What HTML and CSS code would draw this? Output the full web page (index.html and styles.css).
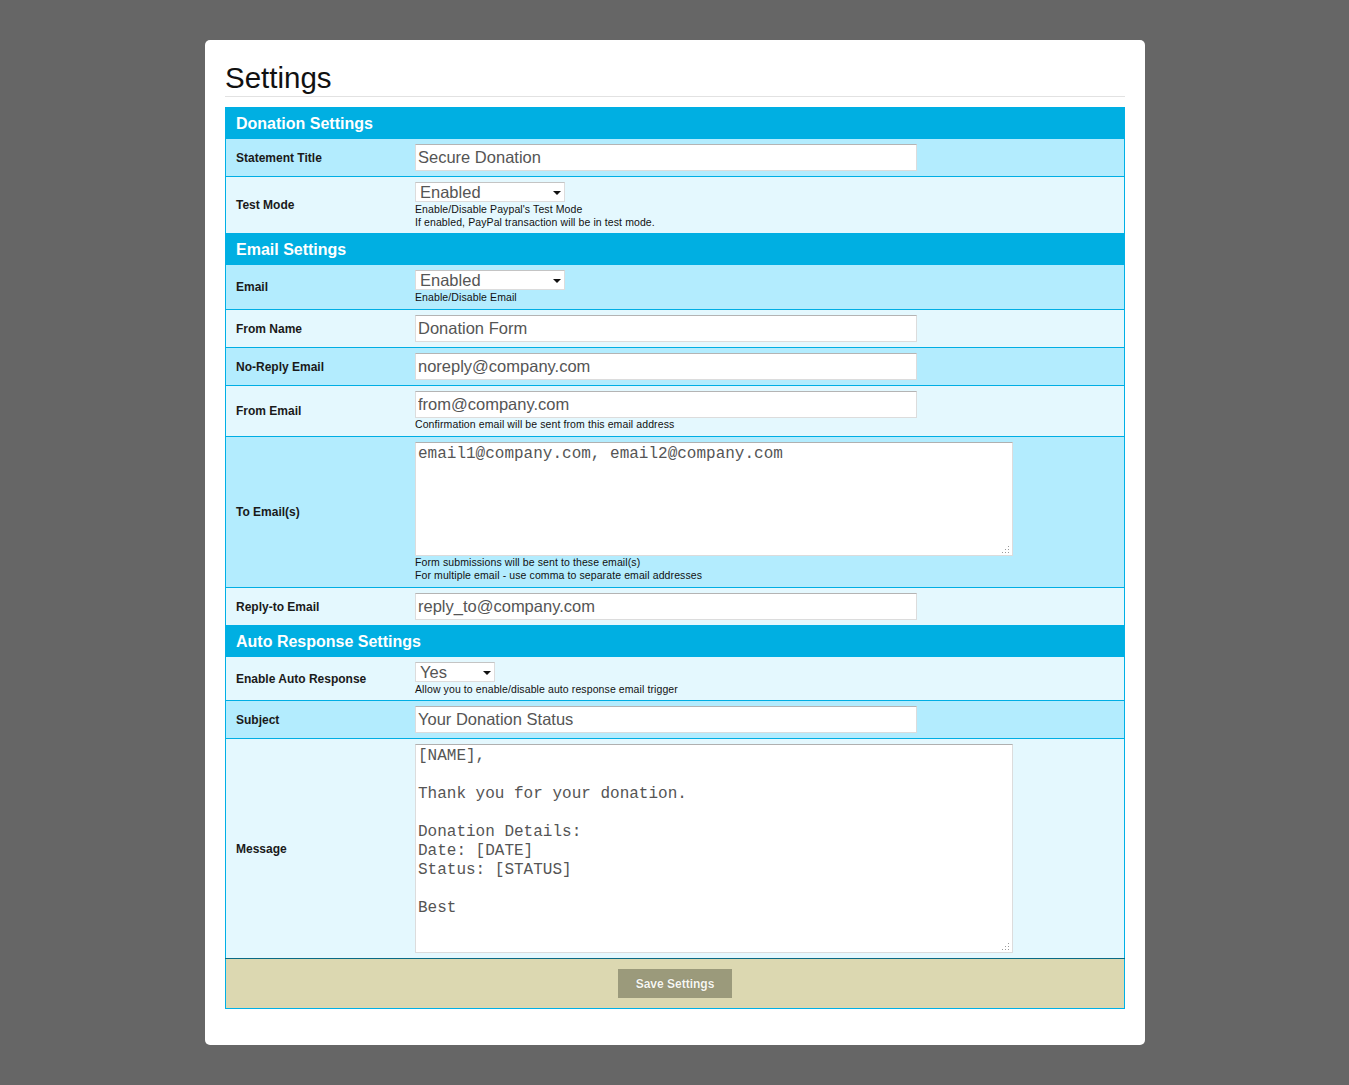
FILE: index.html
```html
<!DOCTYPE html>
<html>
<head>
<meta charset="utf-8">
<title>Settings</title>
<link rel="stylesheet" href="styles.css">
</head>
<body>
<div class="card">
  <h1 class="title">Settings</h1>
  <table class="settings">
    <tr class="section"><th colspan="2">Donation Settings</th></tr>
    <tr class="row-a">
      <td class="label">Statement Title</td>
      <td class="field"><input class="text" type="text" value="Secure Donation"></td>
    </tr>
    <tr class="row-b">
      <td class="label">Test Mode</td>
      <td class="field tight">
        <span class="select-wrap w150"><select class="select"><option>Enabled</option><option>Disabled</option></select></span>
        <div class="help">Enable/Disable Paypal's Test Mode<br>If enabled, PayPal transaction will be in test mode.</div>
      </td>
    </tr>
    <tr class="section"><th colspan="2">Email Settings</th></tr>
    <tr class="row-a">
      <td class="label">Email</td>
      <td class="field">
        <span class="select-wrap w150"><select class="select"><option>Enabled</option><option>Disabled</option></select></span>
        <div class="help">Enable/Disable Email</div>
      </td>
    </tr>
    <tr class="row-b">
      <td class="label">From Name</td>
      <td class="field"><input class="text" type="text" value="Donation Form"></td>
    </tr>
    <tr class="row-a">
      <td class="label">No-Reply Email</td>
      <td class="field"><input class="text" type="text" value="noreply@company.com"></td>
    </tr>
    <tr class="row-b">
      <td class="label">From Email</td>
      <td class="field">
        <input class="text" type="text" value="from@company.com">
        <div class="help">Confirmation email will be sent from this email address</div>
      </td>
    </tr>
    <tr class="row-a">
      <td class="label">To Email(s)</td>
      <td class="field">
        <div class="area-wrap">
          <textarea class="area area-to">email1@company.com, email2@company.com</textarea>
          <svg class="grip" width="9" height="9" viewBox="0 0 9 9"><rect x="7" y="1" width="1" height="1"/><rect x="4" y="4" width="1" height="1"/><rect x="7" y="4" width="1" height="1"/><rect x="1" y="7" width="1" height="1"/><rect x="4" y="7" width="1" height="1"/><rect x="7" y="7" width="1" height="1"/></svg>
        </div>
        <div class="help">Form submissions will be sent to these email(s)<br>For multiple email - use comma to separate email addresses</div>
      </td>
    </tr>
    <tr class="row-b">
      <td class="label">Reply-to Email</td>
      <td class="field"><input class="text" type="text" value="reply_to@company.com"></td>
    </tr>
    <tr class="section"><th colspan="2">Auto Response Settings</th></tr>
    <tr class="row-b">
      <td class="label">Enable Auto Response</td>
      <td class="field tight">
        <span class="select-wrap w80"><select class="select"><option>Yes</option><option>No</option></select></span>
        <div class="help">Allow you to enable/disable auto response email trigger</div>
      </td>
    </tr>
    <tr class="row-a">
      <td class="label">Subject</td>
      <td class="field"><input class="text" type="text" value="Your Donation Status"></td>
    </tr>
    <tr class="row-b">
      <td class="label">Message</td>
      <td class="field">
        <div class="area-wrap">
          <textarea class="area area-msg">[NAME],

Thank you for your donation.

Donation Details:
Date: [DATE]
Status: [STATUS]

Best</textarea>
          <svg class="grip" width="9" height="9" viewBox="0 0 9 9"><rect x="7" y="1" width="1" height="1"/><rect x="4" y="4" width="1" height="1"/><rect x="7" y="4" width="1" height="1"/><rect x="1" y="7" width="1" height="1"/><rect x="4" y="7" width="1" height="1"/><rect x="7" y="7" width="1" height="1"/></svg>
        </div>
      </td>
    </tr>
    <tr class="footer">
      <td colspan="2"><button class="save" type="button">Save Settings</button></td>
    </tr>
  </table>
</div>
</body>
</html>
```

FILE: styles.css
```css
html, body {
  margin: 0;
  padding: 0;
}
body {
  background: #666666;
  font-family: "Liberation Sans", Arial, sans-serif;
  padding-top: 40px;
  padding-bottom: 40px;
}
.card {
  width: 900px;
  margin-left: 205px;
  background: #ffffff;
  border-radius: 5px;
  padding: 20px 20px 36px 20px;
}
.title {
  margin: 0 0 10px 0;
  font-size: 29.5px;
  font-weight: normal;
  line-height: 36px;
  color: #111111;
  border-bottom: 1px solid #e2e2e2;
  padding-left: 0;
}
.settings {
  width: 900px;
  border-collapse: collapse;
  border: 1px solid #00b0e6;
}
.settings td, .settings th {
  border-top: 1px solid #00aee4;
}
.section th {
  background: #00afe2;
  color: #ffffff;
  font-size: 16px;
  font-weight: bold;
  text-align: left;
  line-height: 18px;
  padding: 7px 10px 5px 10px;
  height: 18px;
}
.row-a td {
  background: #b3ecfe;
}
.row-b td {
  background: #e4f8fe;
}
.label {
  width: 159px;
  padding: 5px 10px;
  font-size: 12px;
  font-weight: bold;
  color: #1a1a1a;
  vertical-align: middle;
}
.field {
  padding: 5px 10px;
  vertical-align: top;
}
.field.tight {
  padding-bottom: 4px;
}
.text {
  display: block;
  box-sizing: border-box;
  width: 502px;
  height: 27px;
  margin: 0;
  padding: 0 2px;
  border: 1px solid #dcdcdc;
  border-top-color: #b4b4b4;
  background: #ffffff;
  font-family: "Liberation Sans", Arial, sans-serif;
  font-size: 16.5px;
  color: #555555;
  outline: none;
}
.select-wrap {
  position: relative;
  display: block;
  height: 20px;
  margin-bottom: 1px;
}
.select-wrap.w150 { width: 150px; }
.select-wrap.w80 { width: 80px; }
.select-wrap::after {
  content: "";
  position: absolute;
  right: 4px;
  top: 9px;
  border-left: 4px solid transparent;
  border-right: 4px solid transparent;
  border-top: 4px solid #111111;
  pointer-events: none;
}
.select {
  -webkit-appearance: none;
  appearance: none;
  display: block;
  box-sizing: border-box;
  width: 100%;
  height: 20px;
  margin: 0;
  padding: 0 0 0 4px;
  border: 1px solid #dcdcdc;
  border-top-color: #c4c4c4;
  border-radius: 0;
  background: #ffffff;
  font-family: "Liberation Sans", Arial, sans-serif;
  font-size: 16.5px;
  line-height: 18px;
  color: #555555;
  outline: none;
}
.help {
  font-size: 10.5px;
  line-height: 13px;
  letter-spacing: 0.1px;
  color: #111111;
  white-space: nowrap;
}
.area-wrap {
  position: relative;
  width: 598px;
}
.grip {
  position: absolute;
  right: 3px;
  bottom: 2px;
  fill: #9a9a9a;
  pointer-events: none;
}
.area {
  display: block;
  box-sizing: border-box;
  width: 598px;
  margin: 0;
  padding: 2px 2px;
  border: 1px solid #dcdcdc;
  border-top-color: #b0b0b0;
  background: #ffffff;
  font-family: "Liberation Mono", "Courier New", monospace;
  font-size: 16px;
  line-height: 19px;
  color: #555555;
  outline: none;
  resize: none;
}
.area-to { height: 114px; }
.area-msg { height: 209px; }
.footer td {
  background: #dcd8b1;
  border-top: 1px solid #0a6a84;
  text-align: center;
  padding: 10px 10px;
}
.save {
  display: inline-block;
  height: 29px;
  padding: 0 18px;
  margin: 0;
  border: none;
  border-radius: 0;
  background: #9b9a7b;
  color: #f6f6f0;
  font-family: "Liberation Sans", Arial, sans-serif;
  font-size: 12px;
  font-weight: bold;
  text-shadow: 0 0 1px rgba(0, 0, 0, 0.25);
  cursor: pointer;
}
```
